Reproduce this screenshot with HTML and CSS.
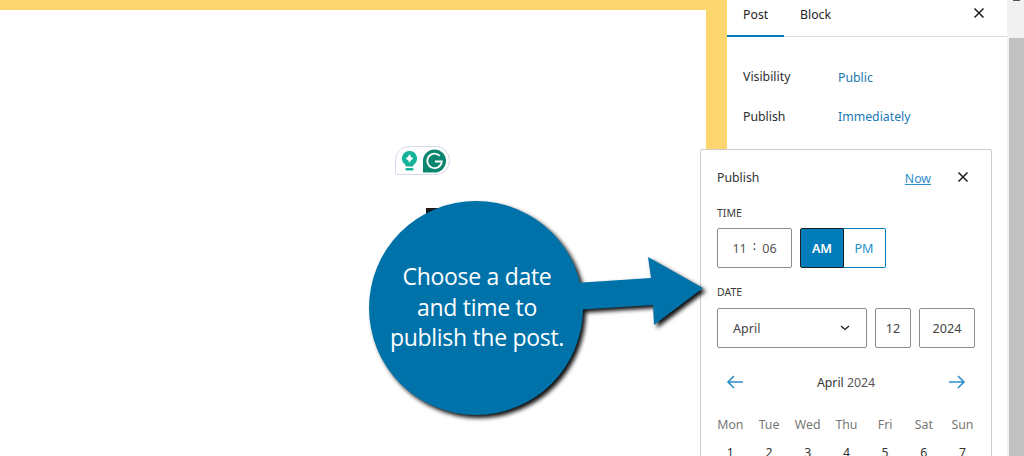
FILE: index.html
```html
<!DOCTYPE html>
<html lang="en">
<head>
<meta charset="utf-8">
<title>Publish</title>
<link rel="stylesheet" href="styles.css">
</head>
<body>
<div class="app">
  <main class="editor">
    <div class="canvas"></div>
  </main>
  <aside class="sidebar">
    <div class="tabs">
      <div class="tab active">Post</div>
      <div class="tab">Block</div>
      <svg class="tabs-close" width="24" height="24" viewBox="0 0 24 24"><path d="M7.500 7.500l9 9M16.500 7.500l-9 9" class="x"/></svg>
    </div>
    <div class="rows">
      <div class="row"><span class="row-label">Visibility</span><span class="row-value">Public</span></div>
      <div class="row"><span class="row-label">Publish</span><span class="row-value">Immediately</span></div>
    </div>
  </aside>
  <div class="scrollbar"><div class="scroll-arrow"></div><div class="scroll-thumb"></div></div>
</div>

<div class="grammarly">
  <svg width="17" height="22" viewBox="0 0 17 22">
    <path d="M8.500 1a7.500 7.500 0 0 1 4.800 13.300c-.8.700-1.100 1.200-1.100 2.200H4.800c0-1-.3-1.500-1.100-2.200A7.500 7.500 0 0 1 8.500 1z" fill="#14b39a"/>
    <path d="M8.500 4.800q.6 2.700 3.400 3.700-2.800 1-3.400 3.700-.6-2.700-3.400-3.700 2.800-1 3.400-3.700z" fill="#fff" stroke="#fff" stroke-width=".8"/>
    <rect x="4.500" y="18" width="8" height="2.500" rx="1.200" fill="#14b39a"/>
  </svg>
  <svg width="23" height="24" viewBox="0 0 23 24">
    <path d="M11.500 .5a11.500 11.500 0 0 1 0 23H0V12A11.500 11.500 0 0 1 11.500 .5z" fill="#0a8570"/>
    <path d="M16.800 6.800A7.300 7.300 0 1 0 18.800 12.500h-6.800" fill="none" stroke="#fff" stroke-width="1.800"/>
  </svg>
</div>

<section class="popover">
  <header class="pop-head">
    <h2 class="pop-title">Publish</h2>
    <a class="now">Now</a>
    <svg class="pop-close" width="24" height="24" viewBox="0 0 24 24"><path d="M7.500 7.500l9 9M16.500 7.500l-9 9" class="x"/></svg>
  </header>
  <div class="label label-time">TIME</div>
  <div class="time-row">
    <div class="time-box"><span>11</span><span class="colon">:</span><span>06</span></div>
    <div class="ampm"><div class="am">AM</div><div class="pm">PM</div></div>
  </div>
  <div class="label label-date">DATE</div>
  <div class="date-row">
    <div class="field month"><span>April</span>
      <svg width="10" height="6" viewBox="0 0 10 6"><path d="M1 1l4 3.500L9 1" fill="none" stroke="#1e1e1e" stroke-width="1.300"/></svg>
    </div>
    <div class="field day">12</div>
    <div class="field year">2024</div>
  </div>
  <div class="cal-nav">
    <svg width="20" height="16" viewBox="0 0 20 16"><path d="M18 8H3M9 2L3 8l6 6" fill="none" stroke="#2b8fc9" stroke-width="1.600"/></svg>
    <div class="cal-title"><span class="cal-month">April</span> 2024</div>
    <svg width="20" height="16" viewBox="0 0 20 16"><path d="M2 8h15M11 2l6 6-6 6" fill="none" stroke="#2b8fc9" stroke-width="1.600"/></svg>
  </div>
  <div class="week">
    <span>Mon</span><span>Tue</span><span>Wed</span><span>Thu</span><span>Fri</span><span>Sat</span><span>Sun</span>
  </div>
  <div class="days">
    <span>1</span><span>2</span><span>3</span><span>4</span><span>5</span><span>6</span><span>7</span>
  </div>
</section>

<svg class="callout" width="350" height="240" viewBox="0 0 350 240">
  <rect x="61" y="12" width="20" height="20" fill="#1a1a1a"/>
  <g class="callout-shape">
    <circle cx="111" cy="112" r="107"/>
    <path d="M210 87l76-5-3-21 55 31-49 37-1-20-78 5z"/>
  </g>
</svg>
<div class="callout-text">Choose a date<br>and time to<br>publish the post.</div>
</body>
</html>
```

FILE: styles.css
```css
* { box-sizing: border-box; }
html, body { margin: 0; height: 456px; overflow: hidden; background: #fff; }
body { font-family: "Noto Sans", "Open Sans", sans-serif; font-size: 12.300px; color: #1e1e1e; position: relative; }

.app { display: flex; height: 456px; }
.editor { width: 727px; background: #fdd670; padding: 10px 21px 0 0; }
.canvas { background: #fff; height: 100%; }

.sidebar { width: 280px; background: #fff; }
.tabs { display: flex; height: 37px; border-bottom: 1px solid #ddd; position: relative; }
.tab { padding: 6px 16px 0; height: 37px; line-height: 18px; width: 57px; color: #1e1e1e; }
.tab.active { border-bottom: 2px solid #007cba; }
.tab + .tab { width: auto; }
.tabs-close { position: absolute; left: 240px; top: 1px; }
.x { stroke: #1e1e1e; stroke-width: 1.500; fill: none; }

.rows { padding: 31px 16px 0; display: flex; flex-direction: column; gap: 21px; }
.row { display: flex; line-height: 18px; }
.row-label { width: 95px; color: #2c2c2c; }
.row-value { color: #1878b4; }
.row:first-child .row-value { padding-top: 1px; }

.scrollbar { width: 17px; background: #f1f1f1; padding-left: 2px; }
.scroll-arrow { height: 38px; position: relative; }
.scroll-arrow::before { content: ""; position: absolute; left: 4px; top: 0; width: 7px; height: 1px; background: #555; }
.scroll-thumb { height: 418px; background: #c1c1c1; }

.grammarly {
  position: absolute; left: 395px; top: 146px; width: 55px; height: 29px;
  border: 1px solid #d5d8e8; border-radius: 14px 14px 14px 3px; background: #fff;
  display: flex; align-items: center; gap: 5px; padding-left: 5px;
}

.callout { position: absolute; left: 365px; top: 196px; }
.callout-shape { fill: #0072aa; filter: drop-shadow(3px 3px 2px rgba(0,0,0,.95)); }
.callout-text {
  position: absolute; left: 369px; top: 261px; width: 216px; text-align: center;
  font-family: "Open Sans", sans-serif; font-size: 23px; line-height: 30.500px; color: #fff; letter-spacing: -.3px;
}

.popover {
  position: absolute; left: 700px; top: 149px; width: 292px; height: 320px;
  background: #fff; border: 1px solid #ccc; border-radius: 2px; padding: 0 16px; overflow: hidden;
}
.pop-head { display: flex; align-items: center; height: 56px; padding-bottom: 2px; }
.pop-title { font-size: 12.300px; font-weight: 400; margin: 0; flex: 1; color: #333; }
.now { color: #2b8fc9; text-decoration: underline; margin-right: 20px; margin-top: 2px; }

.label { font-size: 10.500px; line-height: 14px; color: #3a3a3a; }
.time-row { display: flex; gap: 8px; margin-top: 8px; height: 40px; }
.time-box {
  width: 75px; border: 1px solid #8d8d8d; border-radius: 2px; display: flex; align-items: center;
  justify-content: center; gap: 6px; color: #555; font-size: 12.600px;
}
.colon { position: relative; top: -3px; color: #333; }
.ampm { display: flex; width: 86px; font-size: 12.600px; }
.am { width: 44px; background: #007cba; color: #fff; font-weight: 600; border: 1px solid #1e1e1e; border-radius: 2px 0 0 2px; display: flex; align-items: center; justify-content: center; }
.pm { width: 43px; margin-left: -1px; color: #2b8fc9; border: 1px solid #007cba; border-left: 0; border-radius: 0 2px 2px 0; display: flex; align-items: center; justify-content: center; }

.label-date { margin-top: 17px; }
.date-row { display: flex; gap: 8px; margin-top: 9px; height: 40px; }
.field { border: 1px solid #8d8d8d; border-radius: 2px; display: flex; align-items: center; color: #444; font-size: 12.600px; }
.month { width: 150px; justify-content: space-between; padding: 0 16px 0 15px; }
.day { width: 36px; justify-content: center; }
.year { width: 56px; justify-content: center; }

.cal-nav { display: flex; align-items: center; justify-content: space-between; width: 258px; margin-top: 26px; height: 16px; padding: 0 8px; }
.cal-title { color: #555; }
.cal-month { color: #333; }

.week, .days { display: grid; grid-template-columns: repeat(7, 38.700px); margin-left: -6px; text-align: center; color: #777; line-height: 18px; }
.week { margin-top: 26px; }
.days { margin-top: 10px; color: #333; }
```
